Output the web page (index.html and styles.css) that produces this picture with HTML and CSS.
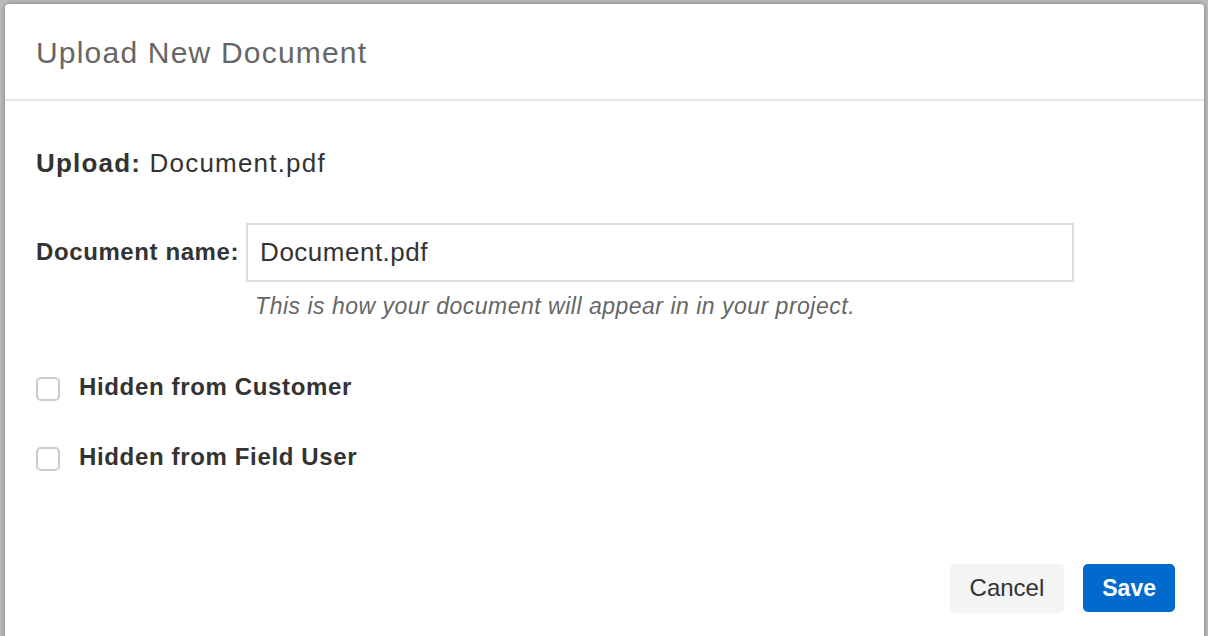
FILE: index.html
```html
<!DOCTYPE html>
<html lang="en">

<head>
  <title>Upload New Document</title>
  <meta charset="UTF-8">
  <link rel="stylesheet" href="styles.css">
</head>

<body>
  <div class="modal">
    <div class="modal-header">
      <h1>Upload New Document</h1>
    </div>
    <div class="modal-body">
      <p class="upload-file"><strong>Upload:</strong> Document.pdf</p>
      <div class="campo">
        <label for="doc-name">Document name:</label>
        <div class="campo-input">
          <input id="doc-name" type="text" value="Document.pdf">
          <span class="ajuda">This is how your document will appear in in your project.</span>
        </div>
      </div>
      <label class="check">
        <input type="checkbox">
        <span>Hidden from Customer</span>
      </label>
      <label class="check">
        <input type="checkbox">
        <span>Hidden from Field User</span>
      </label>
    </div>
    <div class="modal-footer">
      <button class="btn btn-cancel">Cancel</button>
      <button class="btn btn-save">Save</button>
    </div>
  </div>
</body>

</html>
```

FILE: styles.css
```css
* {
  margin: 0;
  padding: 0;
  box-sizing: border-box;
  font-family: 'Liberation Sans', Arial, sans-serif;
  color: rgb(51, 51, 51);
}

body {
  width: 1208px;
  height: 636px;
  overflow: hidden;
  background-color: rgb(190, 190, 190);
  padding: 4px 4px 0 5px;
}

.modal {
  height: 640px;
  background-color: white;
  border-radius: 4px 4px 0 0;
  box-shadow: 0 0 6px rgba(0, 0, 0, 0.35);
  display: flex;
  flex-direction: column;
}

.modal-header {
  height: 97px;
  padding: 2px 31px 0;
  border-bottom: 2px solid rgb(232, 232, 232);
  display: flex;
  align-items: center;
}

.modal-header h1 {
  font-size: 30px;
  font-weight: normal;
  letter-spacing: 1.2px;
  color: rgb(102, 102, 102);
}

.modal-body {
  padding: 46px 31px 0;
}

.upload-file {
  font-size: 26px;
  letter-spacing: 1.2px;
  line-height: 32px;
}

.upload-file strong {
  font-weight: bold;
}

.campo {
  display: flex;
  align-items: flex-start;
  margin-top: 44px;
}

.campo label {
  font-size: 24px;
  font-weight: bold;
  letter-spacing: 0.6px;
  line-height: 58px;
  margin-right: 7px;
}

.campo-input {
  display: flex;
  flex-direction: column;
}

.campo-input input {
  width: 828px;
  height: 59px;
  border: 2px solid rgb(222, 222, 222);
  padding: 0 12px;
  font-size: 26px;
  letter-spacing: 0.5px;
  outline: none;
}

.ajuda {
  font-size: 23px;
  font-style: italic;
  letter-spacing: 0.5px;
  color: rgb(102, 102, 102);
  margin: 11px 0 0 9px;
}

.check {
  display: flex;
  align-items: center;
  gap: 19px;
  font-size: 24px;
  font-weight: bold;
  letter-spacing: 0.65px;
  height: 34px;
}

.check:first-of-type {
  margin-top: 50px;
}

.check + .check {
  margin-top: 36px;
}

.check input {
  appearance: none;
  width: 24px;
  height: 24px;
  border: 2px solid rgb(204, 204, 204);
  border-radius: 5px;
  background-color: white;
  margin-top: 4px;
}

.modal-footer {
  display: flex;
  justify-content: flex-end;
  gap: 19px;
  padding: 0 29px;
  margin-top: 90px;
}

.btn {
  height: 48px;
  border: none;
  border-radius: 5px;
  font-size: 24px;
  padding: 0 19px;
}

.btn-cancel {
  padding: 0 20px;
  background-color: rgb(244, 244, 244);
  box-shadow: 0 1px 2px rgba(0, 0, 0, 0.06);
}

.btn-save {
  background-color: rgb(0, 107, 204);
  color: white;
  font-weight: bold;
  font-size: 23px;
}
```
